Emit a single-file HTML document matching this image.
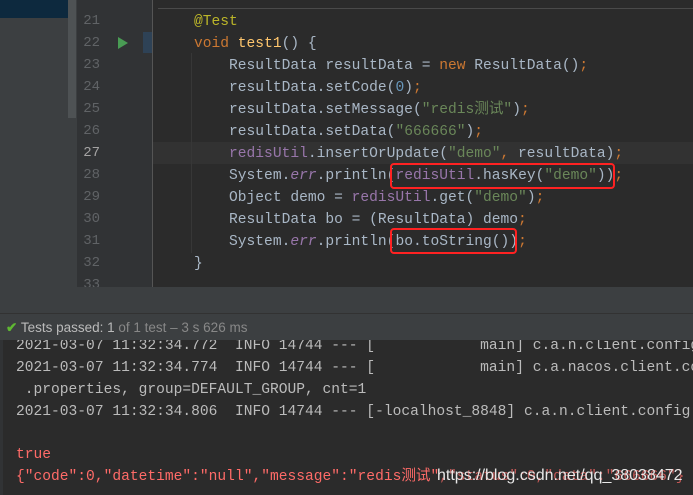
<!DOCTYPE html>
<html><head><meta charset="utf-8"><style>
body{margin:0;width:693px;height:495px;overflow:hidden;background:#2b2b2b;position:relative;font-family:"Liberation Mono","Noto Sans CJK SC",monospace;font-size:14.6px}
.a{position:absolute}
.ln{position:absolute;left:78px;width:22px;text-align:right;color:#606366;font-size:14px}
.cl{position:absolute;left:194px;white-space:pre;color:#a9b7c6;line-height:22px}
.k{color:#cc7832}.s{color:#6a8759}.p{color:#9876aa}.m{color:#ffc66d}.an{color:#bbb529}.n{color:#6897bb}
.con{position:absolute;left:16px;white-space:pre;color:#bbbbbb;line-height:22px}
.box{position:absolute;border:2px solid #f22;border-radius:4px}
</style></head><body>
<div class="a" style="left:0;top:0;width:77px;height:287px;background:#3c3f41"></div>
<div class="a" style="left:0;top:0;width:68px;height:18px;background:#0d293e"></div>
<div class="a" style="left:68px;top:0;width:8px;height:118px;background:#4e5254"></div>
<div class="a" style="left:77px;top:0;width:76px;height:287px;background:#313335"></div>
<div class="a" style="left:152px;top:0;width:1px;height:287px;background:#555"></div>
<div class="a" style="left:158px;top:8px;width:535px;height:1px;background:#4a4a4a"></div>
<div class="a" style="left:153px;top:142px;width:540px;height:22px;background:#323232"></div>
<div class="a" style="left:143px;top:32px;width:9px;height:21px;background:#2e4256"></div>
<div class="a" style="left:118px;top:37px;width:0;height:0;border-left:10px solid #499c54;border-top:6px solid transparent;border-bottom:6px solid transparent"></div>
<div class="a" style="left:191px;top:53px;width:1px;height:200px;background:#373737"></div>
<div class="ln" style="top:13px">21</div><div class="ln" style="top:35px">22</div><div class="ln" style="top:57px">23</div><div class="ln" style="top:79px">24</div><div class="ln" style="top:101px">25</div><div class="ln" style="top:123px">26</div><div class="ln" style="top:145px;color:#a4a3a3">27</div><div class="ln" style="top:167px">28</div><div class="ln" style="top:189px">29</div><div class="ln" style="top:211px">30</div><div class="ln" style="top:233px">31</div><div class="ln" style="top:255px">32</div><div class="ln" style="top:277px">33</div>
<div class="cl" style="top:11px"><span class="an">@Test</span></div>
<div class="cl" style="top:33px"><span class="k">void </span><span class="m">test1</span>() {</div>
<div class="cl" style="top:55px">    ResultData resultData = <span class="k">new </span>ResultData()<span class="k">;</span></div>
<div class="cl" style="top:77px">    resultData.setCode(<span class="n">0</span>)<span class="k">;</span></div>
<div class="cl" style="top:99px">    resultData.setMessage(<span class="s">"redis测试"</span>)<span class="k">;</span></div>
<div class="cl" style="top:121px">    resultData.setData(<span class="s">"666666"</span>)<span class="k">;</span></div>
<div class="cl" style="top:143px">    <span class="p">redisUtil</span>.insertOrUpdate(<span class="s">"demo"</span><span class="k">, </span>resultData)<span class="k">;</span></div>
<div class="cl" style="top:165px">    System.<span class="p"><i>err</i></span>.println(<span class="p">redisUtil</span>.hasKey(<span class="s">"demo"</span>))<span class="k">;</span></div>
<div class="cl" style="top:187px">    Object demo = <span class="p">redisUtil</span>.get(<span class="s">"demo"</span>)<span class="k">;</span></div>
<div class="cl" style="top:209px">    ResultData bo = (ResultData) demo<span class="k">;</span></div>
<div class="cl" style="top:231px">    System.<span class="p"><i>err</i></span>.println(bo.toString())<span class="k">;</span></div>
<div class="cl" style="top:253px">}</div>
<div class="box" style="left:390px;top:163px;width:221px;height:22px"></div>
<div class="box" style="left:390px;top:228px;width:123px;height:22px"></div>
<div class="a" style="left:0;top:287px;width:693px;height:26px;background:#3c3f41"></div>
<div class="a" style="left:0;top:313px;width:693px;height:1px;background:#323232"></div>
<div class="a" style="left:0;top:336px;width:693px;height:159px;background:#2b2b2b"></div>
<div class="con" style="top:335px">2021-03-07 11:32:34.772  INFO 14744 --- [            main] c.a.n.client.config</div>
<div class="a" style="left:0;top:314px;width:693px;height:26px;background:#3c3f41;font-family:'Liberation Sans',sans-serif;font-size:13.5px;line-height:27px;color:#bbb">
<span style="color:#5fb832;margin-left:6px;font-weight:bold">✔</span> Tests passed: 1 <span style="color:#888">of 1 test – 3 s 626 ms</span></div>
<div class="a" style="left:0;top:340px;width:3px;height:155px;background:#313335"></div>
<div class="con" style="top:357px">2021-03-07 11:32:34.774  INFO 14744 --- [            main] c.a.nacos.client.co</div>
<div class="con" style="top:379px"> .properties, group=DEFAULT_GROUP, cnt=1</div>
<div class="con" style="top:401px">2021-03-07 11:32:34.806  INFO 14744 --- [-localhost_8848] c.a.n.client.config</div>
<div class="con" style="top:444px;color:#ff6b68">true</div>
<div class="con" style="top:466px;color:#ff6b68">{"code":0,"datetime":"null","message":"redis测试","status":0,"data":"666666"}</div>
<div class="a" style="left:437px;top:465px;font-family:'Liberation Sans',sans-serif;font-size:16px;color:#e8e8e8;line-height:22px;background:rgba(43,43,43,0.3)">https://blog.csdn.net/qq_38038472</div>
</body></html>
